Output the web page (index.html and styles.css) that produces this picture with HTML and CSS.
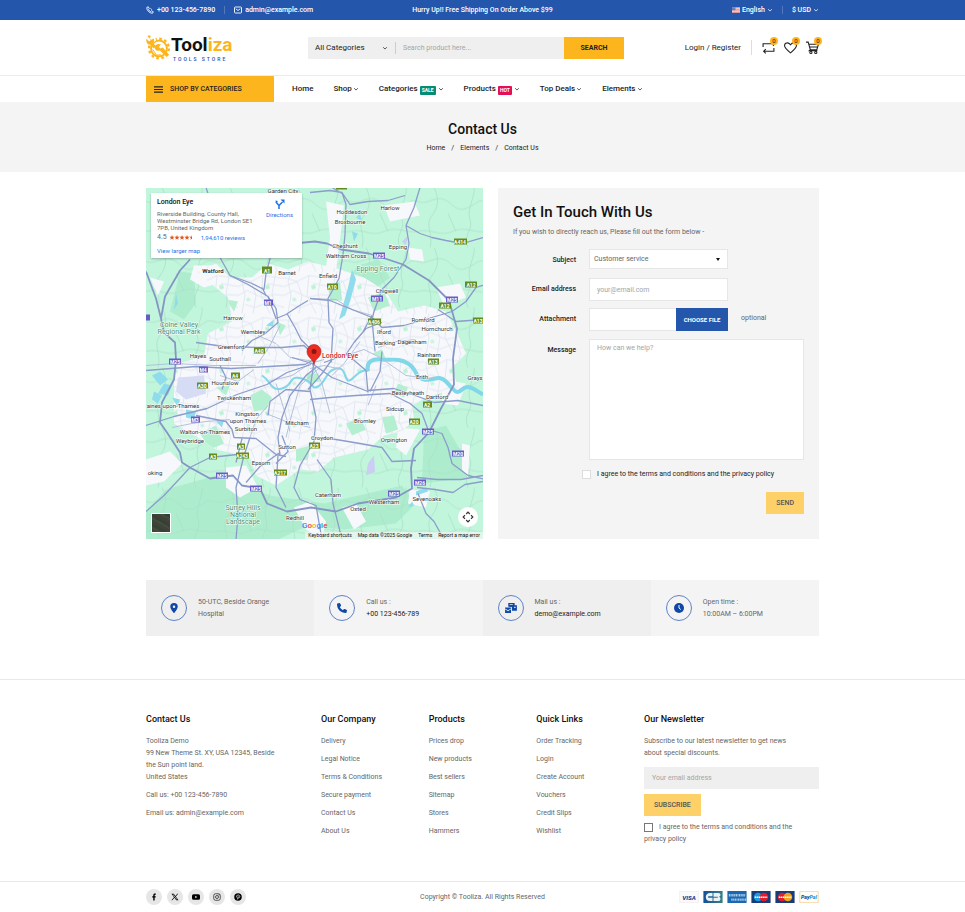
FILE: index.html
```html
<!DOCTYPE html>
<html lang="en">
<head>
<meta charset="utf-8">
<meta name="viewport" content="width=device-width, initial-scale=1">
<title>Contact Us - Tooliza</title>
<link rel="stylesheet" href="styles.css">
</head>
<body>
<svg class="sprite" aria-hidden="true">
  <symbol id="chev" viewBox="0 0 8 8"><path d="M1.500 3 4 5.400l2.500-2.400" fill="none" stroke="currentColor" stroke-width="1"/></symbol>
  <symbol id="phone" viewBox="0 0 512 512"><path fill="currentColor" d="M165 25c-8-19-29-29-48-23L29 26C12 31 0 46 0 64c0 247 201 448 448 448 18 0 33-12 38-29l24-88c5-20-5-41-24-49l-96-40c-16-7-35-2-46 12l-40 49c-71-33-127-90-161-161l50-40c13-11 18-30 11-46z"/></symbol>
</svg>

<div class="topbar">
  <div class="container topbar-row">
    <div class="topbar-side">
      <a href="#"><svg class="ico8" viewBox="0 0 16 16" fill="none" stroke="currentColor" stroke-width="1.800"><path d="M4.500 1.500 1.500 3C1.500 9 7 14.500 13 14.500l1.500-3-3.500-2-2 1.500C7.500 10.500 5.500 8.500 5 7l1.500-2z"/><path d="M9 5c1.200.3 2 1 2.200 2.200"/></svg>+00 123-456-7890</a>
      <span class="sep"></span>
      <a href="#"><svg class="ico8" viewBox="0 0 16 14" fill="none" stroke="currentColor" stroke-width="1.800"><rect x="1" y="1" width="14" height="12" rx="1.500"/><path d="m3.500 4.500 4.500 3.500 4.500-3.500"/></svg>admin@example.com</a>
    </div>
    <p>Hurry Up!! Free Shipping On Order Above $99</p>
    <div class="topbar-side end">
      <button type="button"><svg class="flag" viewBox="0 0 16 11"><path fill="#f7f1f1" d="M0 0h16v11H0z"/><path stroke="#e0605c" stroke-width="1.300" d="M0 1h16M0 4h16M0 7h16M0 10h16"/><path fill="#6a7fb8" d="M0 0h7v6H0z"/></svg>English<svg class="chev"><use href="#chev"/></svg></button>
      <span class="sep"></span>
      <button type="button">$ USD<svg class="chev"><use href="#chev"/></svg></button>
    </div>
  </div>
</div>

<header class="header">
  <div class="container header-row">
    <a class="logo" href="#" aria-label="Tooliza Tools Store">
      <svg class="logo-mark" viewBox="0 0 50 54">
        <circle cx="27" cy="29" r="16.500" fill="none" stroke="#fdb51e" stroke-width="4"/>
        <circle cx="27" cy="29" r="20.500" fill="none" stroke="#fdb51e" stroke-width="5" stroke-dasharray="5.500 5.230"/>
        <path fill="#fff" d="M0 0h17l4 12-10 9L0 18z"/>
        <path fill="#fdb51e" d="M3 3c2-1 5-1 7 0l-2 5 3 3 5-3c2 4 1 8-2 10l7 6-5 5-8-8C3 21-1 15 1 9l5 5 3-1 0-3z"/>
        <path fill="#fdb51e" d="M18 26c2-6 8-8 13-5l-4 5 3 3 5-2 13 15-5 5-14-14c-6 3-11-1-11-7z"/>
        <path d="m14 31 8 12 9-1" fill="none" stroke="#fdb51e" stroke-width="2"/>
      </svg>
      <span class="logo-text"><strong>Tool<em>iza</em></strong><small>TOOLS STORE</small></span>
    </a>
    <form class="search">
      <span class="search-cat"><select aria-label="Category"><option>All Categories</option></select><svg class="chev"><use href="#chev"/></svg></span>
      <input type="search" placeholder="Search product here..." aria-label="Search product">
      <button type="button">SEARCH</button>
    </form>
    <div class="account">
      <a href="#">Login / Register</a>
      <span class="sep"></span>
      <a class="tool" href="#" aria-label="Compare"><svg viewBox="0 0 24 24"><path d="M2 11V5h19v4M22 13v6H4M7 15l-4 4 4 4"/></svg><b>0</b></a>
      <a class="tool" href="#" aria-label="Wishlist"><svg viewBox="0 0 24 24"><path d="M12 22C6 17 1 13 1 8.500 1 3 8 1.500 12 7c4-5.500 11-4 11 1.500C23 13 18 17 12 22z"/></svg><b>0</b></a>
      <a class="tool" href="#" aria-label="Cart"><svg viewBox="0 0 24 24"><path d="M0 2h4l4 14h12l3-10H5M8 16l-2 2h15M7 11h14"/><circle cx="9" cy="21" r="2"/><circle cx="18" cy="21" r="2"/></svg><b>0</b></a>
    </div>
  </div>
</header>

<nav class="nav">
  <div class="container nav-row">
    <button class="cats" type="button"><svg viewBox="0 0 9 7"><path d="M0 .8h9M0 3.500h9M0 6.200h9" stroke="currentColor" stroke-width="1.200"/></svg>SHOP BY CATEGORIES</button>
    <ul>
      <li><a href="#">Home</a></li>
      <li><a href="#">Shop<svg class="chev"><use href="#chev"/></svg></a></li>
      <li><a href="#">Categories<i class="tag sale">SALE</i><svg class="chev"><use href="#chev"/></svg></a></li>
      <li><a href="#">Products<i class="tag hot">HOT</i><svg class="chev"><use href="#chev"/></svg></a></li>
      <li><a href="#">Top Deals<svg class="chev"><use href="#chev"/></svg></a></li>
      <li><a href="#">Elements<svg class="chev"><use href="#chev"/></svg></a></li>
    </ul>
  </div>
</nav>

<section class="banner">
  <h1>Contact Us</h1>
  <p><a href="#">Home</a><span>/</span><a href="#">Elements</a><span>/</span><a href="#">Contact Us</a></p>
</section>

<main class="container">
  <section class="contact">
    <div class="map">
      <svg class="map-art" viewBox="0 0 337 352" preserveAspectRatio="xMidYMid slice" role="img" aria-label="Map of London">
        <defs>
          <pattern id="streets" width="46" height="42" patternUnits="userSpaceOnUse">
            <path d="M0 6l13 4 12-6 21 3M0 24l9-5 15 7 12-3 10 1M4 42l3-18-3-14 3-10M13 10l5 14-3 18M25 4l-2 20 9 18M38 0l-4 22 5 20M7 33l10 3 13-5 16 5M29 12l17 3M0 15l13-5" fill="none" stroke="#dde3ed" stroke-width=".8"/>
            <path d="M27 14l4-1 1 4-4 1z" fill="#bdf2d6"/><path d="M8 27l3-1 2 3-4 1z" fill="#c9f4dd"/>
          </pattern>
          <pattern id="lanes" width="68" height="60" patternUnits="userSpaceOnUse">
            <path d="M0 14c10 4 16-6 26-2s12 14 24 8 10-8 18-6M12 60c4-14-6-22 2-32S20 8 16 0M50 60c-6-12 6-18 2-28S58 8 56 0M0 44c12-4 22 6 34 0s22 2 34 0M30 26l8 18" fill="none" stroke="#a9dfc8" stroke-width=".8"/>
          </pattern>
          <clipPath id="town"><path id="townshape" d="M50 84 70 76l14 14 22 0 16-14 20 6 20-8 32 8 24 8 22 14 12 20 26-6 22 6 12 24 8 18-14 14 6 20-32 10-14 8 2 14-12 12-18 4-16 14-34 8-16 14-18-2-24 16-20-10-6-18-34-8-18-12-24-14V178l30-10 4-22 24-12-4-24z"/></clipPath>
        </defs>
        <path fill="#c2f6dc" d="M0 0h337v352H0z"/>
        <path fill="#adedce" d="M20 302l50-14 54 20 54 8 52-12 26-6 14 18-20 20-52 6-36-4-30 14H0v-28zM278 244l22-6 14 24 12 28-50 6zM212 78l20-6 12 18-18 14-20 4-6-14zM34 84l14 2 2 30-12 16-14-8z"/>
        <path fill="url(#lanes)" d="M0 0h337v352H0z"/>
        <use href="#townshape" fill="#f6f8fb"/>
        <path fill="#f6f8fb" d="M48 78l22 0 8 16-20 6-14-8zM180 14l18 4-4 34-4 32-10-4 4-30zM238 18l30-4 6 14-30 6zM316 256l8 2-2 32-6-8zM80 280l20-2 12 22-18 10-14-10zM0 272l24-8 12 12-18 18-18 4zM148 320l16-6 16 20-4 18-16-10zM264 302l20 2-4 16-18-4zM196 320l14-4 10 18-12 8zM262 60l14 2 2 12-14-2zM4 90l14 4-6 14zM290 100l24-4 6 14-22 8zM296 192l24 4-8 22-16-2zM252 240l22 2-14 26-10-8z"/>
        <g clip-path="url(#town)">
          <path fill="url(#streets)" d="M0 60h337v250H0z"/>
          <path fill="#b5efd1" d="M104 208l12-6 10 8-6 12-12 2zM60 130l12-8 2 14-10 6zM80 112l12 2-4 10zM182 98l12-4 2 18-12 2zM222 110l16-6 6 14-16 6zM130 134l10 4-6 10zM54 246l16-8 8 18-14 6zM160 186l12 0 2 8-12 2zM252 196l10 4-4 10-10-4zM200 236l14-6 6 12-14 6zM150 262l14-4-2 14-12 2zM236 230l12-2 4 14-12 4zM226 166l10-4 4 10zM70 200l14-2-4 10z"/>
        </g>
        <path fill="#d5dcf4" d="M32 190l26-2 2 18-20 6-10-8z"/>
        <path fill="#c9cef2" d="M222 276l6-8 1 16-9 4zM256 54l6-6-2 10z"/>
        <g fill="#8fdced"><path d="M6 188l8-4 8 8-8 6zM18 196l8 2-4 10-10-2zM8 204l8 4-4 8-6-4zM40 222l10 2-2 8-8-2zM70 234l8-2-2 8zM26 210l8 2-2 8zM206 82l4 10-6 22-5 14-6 4 4-14 5-18zM206 44l6 2-4 8zM210 30l4-4 2 8zM30 106l2 10-4 6zM120 138l8-6-1 7zM270 304l10-4 2 4-12 4zM262 320l4-6 2 4z"/></g>
        <path d="M116 188c10 6 8 16 20 13s6-14 20-10 8 12 16 8 8-16 18-18 8 10 12 12 10-12 20-10" fill="none" stroke="#80d7e7" stroke-width="2"/>
        <path d="M222 184c-2-10 4-13 14-12s16-2 26 4 6 14 16 16 14-6 22 2 10 14 16 8 12 0 21 5" fill="none" stroke="#80d7e7" stroke-width="4"/>
        <g fill="none" stroke="#b4c0dc" stroke-width="1">
          <path d="M164 111l26 1 16 10 20 6M196 182l-18-4-14 3M112 176l12-18 10-20M112 148l18 8 14 14 24 4M178 172l-14 4-18 12-24 6M74 188l18 6 16-12M184 226l-8-30-10-20M140 250l6-24 8-28 20-18M84 232l-24 2-14 2-20 4M104 250l6-18 12-14M214 154l-16 22-12 12M232 160l18-6 20-2M230 198l-8 20M120 226l20 8 24 6M200 168l18-6 16 8 26 18 30 4M0 178l28-2 40 2 42 0M130 196l8 26 6 22"/>
        </g>
        <g fill="none" stroke="#8c9ccb" stroke-width="1.300" stroke-linejoin="round">
          <path d="M60 0l2 6M64 60l10 10 10 18 18 9 20 12 8 12 2 14-14 12-12 6-10 10"/>
          <path d="M84 88l22 8 12 6 2-16 6-22M120 108l-4-8M122 109l8 22 10-4 12-8 10-6M141 126l8 14 6 12 12 12"/>
          <path d="M164 5l20-2 12 2 8 12 18-3 20-1 17-5M196 5l4 12-1 30-2 20-4 24-11 20 1 24 4 6-2 34M186 0l10 6M274 0l-6 20-8 18 3 18-3 16-12 18-12 12-8 22-2 8 3 32M260 38l14 8 12 4 14 3 16 3 21-6"/>
          <path d="M164 111l20 2 22 9 20 8 10 10 22-2 28-8 20-6 14-10 10-14 19-6M292 122l18 12 27-2M236 135l-16 6-12 14-8 12-22 8M226 128l-10 18"/>
          <path d="M0 183l50-4 35 2 38-2 36-2 14-8M0 238l28-9 33-8 30-14 30-10 20-12 24-8M50 228l30 6 6 8 2 8 22 1 20 16 10 2M50 155l28 4 34 1 24 0 22-2 10 10M134 268l-2-18 4-20 8-22 16-20 10-8"/>
          <path d="M0 324l18-16 26-28 20-10 36-4M104 250l-6 18-6 24-2 8 2 28-2 24M96 251l-6 24M134 265l-20 14-14 16M132 268l-2 32 10 20M136 248l6 16-12 12"/>
          <path d="M168 174l-4 28 6 28-2 24-14 24-6 22 6 12 16 6 6 34M171 272l14 20 2 24 9 36M164 212l20-2 26-2 34-2 20 10 12 10 6 16 14 4 6 14 4 16 16 12 35 8M166 250l24 2 24 4 22 4 10 14 24-1M271 290l20 2 24 0 22-4M271 300l18 2 18 3 12-8 18-3M272 306l8 20 8 8 10 18M222 203l26-2 24 8 16 6 24-2 25 5M222 205l-2-22-14-12"/>
          <path d="M164 204l-24-2-16 12-2 14M186 172l-10 14-14 16M236 164l-2 20-10 20M146 170l20 6 20 14 36 14M74 178l6 12-4 12"/>
        </g>
        <path d="M0 84l10 27 5 20 3 14 11 10 1 17-2 20-12 23-2 20 7 10 13 20 2 10 8 5 20 11 23-3 9 10 18 3 7 15 20 8 24-4 25 4 22-8 38-6 16-9-1-20 3-20 15-16 12-24 13-24-1-26 4-30-4-14-4-14-20-20-26-16-18-6-16-5-28-4-14-6-12-2-22 2M15 131l4-22 15-26 10-11" fill="none" stroke="#8596c5" stroke-width="1.800" stroke-linejoin="round"/>
        <g class="lbl">
          <text x="137" y="5">Garden City</text><text x="206" y="26">Hoddesdon</text><text x="204" y="36">Broxbourne</text><text x="244" y="22">Harlow</text><text x="199" y="60">Cheshunt</text><text x="200" y="70">Waltham Cross</text><text x="252" y="61">Epping</text><text x="67" y="85" class="big">Watford</text><text x="141" y="87">Barnet</text><text x="182" y="90">Enfield</text><text x="241" y="105">Chigwell</text><text x="87" y="132">Harrow</text><text x="107" y="146">Wembley</text><text x="277" y="134">Romford</text><text x="291" y="143">Hornchurch</text><text x="238" y="146">Ilford</text><text x="239" y="157">Barking</text><text x="266" y="156">Dagenham</text><text x="85" y="161">Greenford</text><text x="52" y="170">Hayes</text><text x="74" y="173">Southall</text><text x="283" y="169">Rainham</text><text x="276" y="191">Erith</text><text x="329" y="192">Grays</text><text x="79" y="197">Hounslow</text><text x="262" y="207">Bexleyheath</text><text x="291" y="211">Dartford</text><text x="88" y="212">Twickenham</text><text x="27" y="220">aines-upon-Thames</text><text x="249" y="223">Sidcup</text><text x="101" y="228">Kingston</text><text x="102" y="235">upon Thames</text><text x="100" y="243">Surbiton</text><text x="59" y="246">Walton-on-Thames</text><text x="219" y="235">Bromley</text><text x="151" y="237">Mitcham</text><text x="176" y="252">Croydon</text><text x="248" y="254">Orpington</text><text x="44" y="255">Weybridge</text><text x="141" y="261">Sutton</text><text x="115" y="277">Epsom</text><text x="9" y="287">oking</text><text x="182" y="309">Caterham</text><text x="238" y="316">Westerham</text><text x="212" y="323">Oxted</text><text x="281" y="313">Sevenoaks</text><text x="149" y="332">Redhill</text>
        </g>
        <g class="lbl park"><text x="232" y="83">Epping Forest</text><text x="33" y="139">Colne Valley</text><text x="33" y="146">Regional Park</text><text x="97" y="322">Surrey Hills</text><text x="97" y="329">National</text><text x="97" y="336">Landscape</text></g>
        <g class="road" fill="#648c1a">
          <path d="M116 79h10v7h-10zM181 96h11v6h-11zM308 51h13v6h-13zM319 94h12v6h-12zM293 115h12v6h-12zM327 130h10v6h-10zM222 131h13v6h-13zM108 160h11v6h-11zM282 171h11v6h-11zM85 185h9v6h-9zM51 195h11v6H51zM277 214h9v6h-9zM263 231h11v6h-11zM163 255h11v6h-11zM91 256h8v6h-8zM90 265h13v6H90zM63 266h8v6h-8zM128 282h13v6h-13zM190 0h11v2h-11z"/>
          <text x="121" y="85">A1</text><text x="186" y="101">A10</text><text x="314" y="56">A414</text><text x="325" y="99">A12</text><text x="299" y="120">A12</text><text x="332" y="135">A13</text><text x="228" y="136">A406</text><text x="113" y="165">A40</text><text x="287" y="176">A13</text><text x="89" y="190">A4</text><text x="56" y="200">A30</text><text x="281" y="219">A2</text><text x="268" y="236">A20</text><text x="168" y="260">A23</text><text x="95" y="261">A3</text><text x="96" y="270">A243</text><text x="67" y="271">A3</text><text x="134" y="287">A217</text>
        </g>
        <g class="road" fill="#675cc6">
          <path d="M118 112h9v6h-9zM227 65h12v6h-12zM225 108h12v6h-12zM300 109h12v6h-12zM23 171h12v6H23zM53 179h9v6h-9zM45 229h9v6h-9zM276 241h12v6h-12zM306 263h12v6h-12zM268 292h12v6h-12zM242 303h12v6h-12zM70 285h12v6H70zM104 298h12v6h-12zM0 127h4v6H0z"/>
          <text x="122" y="117">M1</text><text x="233" y="70">M25</text><text x="231" y="113">M11</text><text x="306" y="114">M25</text><text x="29" y="176">M25</text><text x="57" y="184">M4</text><text x="49" y="234">M3</text><text x="282" y="246">M25</text><text x="312" y="268">M20</text><text x="274" y="297">M26</text><text x="248" y="308">M25</text><text x="76" y="290">M25</text><text x="110" y="303">M25</text>
        </g>
        <path fill="#ea2d22" stroke="#b71f17" stroke-width=".6" d="M168 177c-1-6-7-7-7-13a7 7 0 0 1 14 0c0 6-6 7-7 13z"/><circle cx="168" cy="164" r="2.500" fill="#8d1510"/>
        <text class="pin-label" x="176" y="170">London Eye</text>
      </svg>
      <div class="place">
        <div>
          <h2>London Eye</h2>
          <p>Riverside Building, County Hall,<br>Westminster Bridge Rd, London SE1<br>7PB, United Kingdom</p>
          <p class="rating"><b>4.5</b><span class="stars" aria-label="4.5 stars"><svg viewBox="0 0 50 10"><defs><path id="star" d="m5 0 1.400 3.300 3.600.3-2.700 2.400.8 3.500L5 7.700 1.900 9.500l.8-3.500L0 3.600l3.600-.3z"/></defs><g fill="#e7551c"><use href="#star"/><use href="#star" x="10"/><use href="#star" x="20"/><use href="#star" x="30"/><path d="m45 0v7.700l-3.100 1.800.8-3.500L40 3.600l3.600-.3z"/></g></svg></span><a href="#">1,94,610 reviews</a></p>
          <a href="#">View larger map</a>
        </div>
        <a class="directions" href="#"><svg viewBox="0 0 20 20"><path d="M8 20v-7L2 6M8 13l7-7" fill="none" stroke="#1a73e8" stroke-width="3"/><path fill="#1a73e8" d="M11 1h8v8z"/><path fill="#1a73e8" d="M1 3l5 1-4 5z"/></svg>Directions</a>
      </div>
      <button class="sat" type="button" aria-label="Satellite view"></button>
      <button class="full" type="button" aria-label="Move map"><svg viewBox="0 0 20 20" fill="none" stroke="#333" stroke-width="2"><path d="m7 5 3-3 3 3M7 15l3 3 3-3M5 7l-3 3 3 3M15 7l3 3-3 3"/></svg></button>
      <span class="google"><i>G</i><i>o</i><i>o</i><i>g</i><i>l</i><i>e</i></span>
      <div class="map-legal"><span>Keyboard shortcuts</span><span>Map data ©2025 Google</span><a href="#">Terms</a><a href="#">Report a map error</a></div>
    </div>

    <form class="panel">
      <h2>Get In Touch With Us</h2>
      <p>If you wish to directly reach us, Please fill out the form below -</p>
      <div class="fields">
        <label for="subject">Subject</label>
        <div class="pick"><select id="subject"><option>Customer service</option></select></div>
        <label for="email">Email address</label>
        <input id="email" class="box" type="email" placeholder="your@email.com">
        <label for="file">Attachment</label>
        <div class="file"><input id="file" type="file"><span>CHOOSE FILE</span></div>
        <span class="hint">optional</span>
        <label for="message">Message</label>
        <textarea id="message" class="box" placeholder="How can we help?"></textarea>
      </div>
      <label class="agree"><input type="checkbox">I agree to the terms and conditions and the privacy policy</label>
      <button class="btn soft" type="button">SEND</button>
    </form>
  </section>

  <section class="info">
    <div><span class="ring"><svg viewBox="0 0 384 512"><path fill="currentColor" fill-rule="evenodd" d="M216 499c51-64 168-220 168-307a192 192 0 1 0-384 0c0 87 117 243 168 307 12 16 36 16 48 0zM192 128a64 64 0 1 1 0 128 64 64 0 0 1 0-128z"/></svg></span><p>50-UTC, Beside Orange Hospital</p></div>
    <div><span class="ring"><svg viewBox="0 0 512 512"><use href="#phone"/></svg></span><p>Call us :<br><a href="#">+00 123-456-789</a></p></div>
    <div><span class="ring"><svg class="wide" viewBox="0 0 26 22" fill="currentColor"><path fill-rule="evenodd" d="M7 0h14v5h5v12H15V9L7 8zM10 2v2h7V2zM20 8v3h3V8z"/><path d="M0 10h13v2l-6.500 4L0 12zM0 14l6.500 4 6.500-4v8H0z"/></svg></span><p>Mail us :<br><a href="#">demo@example.com</a></p></div>
    <div><span class="ring"><svg viewBox="0 0 20 20"><circle cx="10" cy="10" r="10" fill="currentColor"/><path d="M10 4v6l3.500 3" fill="none" stroke="#fff" stroke-width="2"/></svg></span><p>Open time :<br>10:00AM – 6:00PM</p></div>
  </section>
</main>

<footer class="footer">
  <div class="container columns">
    <section>
      <h3>Contact Us</h3>
      <p>Tooliza Demo<br>99 New Theme St. XY, USA 12345, Beside<br>the Sun point land.<br>United States</p>
      <p>Call us: <a href="#">+00 123-456-7890</a></p>
      <p>Email us: <a href="#">admin@example.com</a></p>
    </section>
    <section>
      <h3>Our Company</h3>
      <ul><li><a href="#">Delivery</a></li><li><a href="#">Legal Notice</a></li><li><a href="#">Terms &amp; Conditions</a></li><li><a href="#">Secure payment</a></li><li><a href="#">Contact Us</a></li><li><a href="#">About Us</a></li></ul>
    </section>
    <section>
      <h3>Products</h3>
      <ul><li><a href="#">Prices drop</a></li><li><a href="#">New products</a></li><li><a href="#">Best sellers</a></li><li><a href="#">Sitemap</a></li><li><a href="#">Stores</a></li><li><a href="#">Hammers</a></li></ul>
    </section>
    <section>
      <h3>Quick Links</h3>
      <ul><li><a href="#">Order Tracking</a></li><li><a href="#">Login</a></li><li><a href="#">Create Account</a></li><li><a href="#">Vouchers</a></li><li><a href="#">Credit Slips</a></li><li><a href="#">Wishlist</a></li></ul>
    </section>
    <section>
      <h3>Our Newsletter</h3>
      <form class="news">
        <p>Subscribe to our latest newsletter to get news about special discounts.</p>
        <input type="email" placeholder="Your email address" aria-label="Your email address">
        <button class="btn soft" type="button">SUBSCRIBE</button>
        <label><input type="checkbox">I agree to the terms and conditions and the privacy policy</label>
      </form>
    </section>
  </div>
  <div class="bottom">
    <div class="container bottom-row">
      <div class="social">
        <a href="#" aria-label="Facebook"><svg viewBox="0 0 16 16"><path d="M6.500 15V9H4.500V6.300h2V4.500C6.500 2.300 7.800 1 10 1h1.600v2.600h-1.200c-.8 0-1.100.4-1.100 1.100v1.600h2.300L11.200 9H9.300v6z"/></svg></a>
        <a href="#" aria-label="X"><svg viewBox="0 0 16 16"><path fill-rule="evenodd" d="M1 1.500h4.500l3.300 4.400 3.800-4.400h1.800L9.600 7l5.400 7.500h-4.500L6.900 9.600l-4.200 4.900H.9L6 8.500zM3.400 3l7.800 10h1.400L4.900 3z"/></svg></a>
        <a href="#" aria-label="YouTube"><svg viewBox="0 0 16 16"><path fill-rule="evenodd" d="M3 2.500h10a3 3 0 0 1 3 3v5a3 3 0 0 1-3 3H3a3 3 0 0 1-3-3v-5a3 3 0 0 1 3-3zM6.500 5.500v5l4-2.500z"/></svg></a>
        <a href="#" aria-label="Instagram"><svg viewBox="0 0 16 16" fill="none" stroke="#222" stroke-width="1.500"><rect x="1.500" y="1.500" width="13" height="13" rx="3.500"/><circle cx="8" cy="8" r="3"/><circle cx="12" cy="4" r=".4"/></svg></a>
        <a href="#" aria-label="Pinterest"><svg viewBox="0 0 16 16"><circle cx="8" cy="8" r="7.500"/><path d="M5.500 9C4 6.500 5.500 4 8.200 4s4.200 2.300 3 4.700c-.8 1.600-2.700 1.700-3.200.8M8.500 6.500 6.800 13" fill="none" stroke="#e8e8e8" stroke-width="1.500"/></svg></a>
      </div>
      <p>Copyright © Tooliza. All Rights Reserved</p>
      <div class="pay">
        <svg viewBox="0 0 40 25" role="img" aria-label="Visa"><path fill="#fafafa" stroke="#e3e3ea" d="M.5.5h39v24H.5z"/><text x="20" y="18" fill="#1d3c90">VISA</text></svg>
        <svg viewBox="0 0 40 25" role="img" aria-label="Carte Bancaire"><defs><linearGradient id="cb"><stop stop-color="#13509c"/><stop offset="1" stop-color="#3a7f80"/></linearGradient></defs><path fill="url(#cb)" d="M0 0h40v25H0z"/><path fill="#e9f2f5" d="M19 4v7h-9v3h9v7h-5C2 21 2 4 14 4zM21 4h10c6 0 6 7 1 8 5 1 5 9-1 9H21v-7h9v-2h-9z"/></svg>
        <svg viewBox="0 0 40 25" role="img" aria-label="American Express"><path fill="#1b68b2" d="M0 0h40v25H0z"/><path stroke="#a5c8e6" stroke-width="5" stroke-dasharray="3 1 2 1" d="M3 9h34M8 18h31"/></svg>
        <svg viewBox="0 0 40 25" role="img" aria-label="Maestro"><path fill="#173c7c" d="M0 0h40v25H0z"/><circle cx="14" cy="12.500" r="9" fill="#1b9ae0"/><circle cx="26" cy="12.500" r="9" fill="#e21c2c"/><path stroke="#fff" stroke-width="3" stroke-dasharray="3 1" d="M7 13h26"/></svg>
        <svg viewBox="0 0 40 25" role="img" aria-label="MasterCard"><path fill="#173c7c" d="M0 0h40v25H0z"/><circle cx="14" cy="12.500" r="9" fill="#e21c2c"/><circle cx="26" cy="12.500" r="9" fill="#f5a11c"/><path stroke="#fff" stroke-width="3" stroke-dasharray="3 1" d="M7 13h26"/></svg>
        <svg viewBox="0 0 40 25" role="img" aria-label="PayPal"><path fill="#fffdf6" stroke="#f5c98c" stroke-width="1.500" d="M.8.8h38.400v23.400H.8z"/><text class="pp" x="20" y="16" fill="#1d3c90">Pay<tspan fill="#1f8fd6">Pal</tspan></text></svg>
      </div>
    </div>
  </div>
</footer>
</body>
</html>
```
FILE: styles.css
```css
* { box-sizing: border-box; }
body {
  margin: 0;
  font: 7px/12px Roboto, "Liberation Sans", sans-serif;
  color: #666;
  background: #fff;
}
h1, h2, h3, p, ul { margin: 0; padding: 0; }
h1, h2, h3 { color: #111; font-weight: 500; }
ul { list-style: none; }
a { color: inherit; text-decoration: none; }
button, input, select, textarea { font: inherit; color: inherit; border: 0; border-radius: 0; padding: 0; margin: 0; background: none; }
button { cursor: pointer; }
input::placeholder, textarea::placeholder { color: #a5a5a5; opacity: 1; }
svg { display: block; flex: none; }
.sprite { display: none; }
.container { max-width: 673px; margin: 0 auto; }
.chev { width: 6px; height: 6px; }

.topbar { background: #2456ab; color: #fff; font-weight: 500; }
.topbar-row { display: grid; grid-template-columns: 1fr auto 1fr; align-items: center; height: 20px; }
.topbar-side, .topbar-side a, .topbar-side button { display: flex; align-items: center; }
.topbar-side { gap: 9px; }
.topbar-side a { gap: 3px; }
.topbar-side button { gap: 2px; }
.topbar-side.end { justify-content: flex-end; }
.ico8 { width: 8px; height: 8px; }
.flag { width: 8px; height: 6px; }
.sep { width: 1px; height: 8px; background: #5478bd; }

.header { border-bottom: 1px solid #ececec; }
.header-row { display: grid; grid-template-columns: 162px 316px 1fr; align-items: center; height: 55px; }
.logo { display: flex; align-items: center; gap: 1px; }
.logo-mark { width: 24px; height: 27px; }
.logo-text strong { display: block; font-size: 19px; line-height: 22px; font-weight: 700; color: #111; }
.logo-text em { font-style: normal; color: #fdb51e; }
.logo-text small { display: block; font-size: 5px; line-height: 6px; font-weight: 500; letter-spacing: 2px; color: #2456ab; padding-left: 2px; }
.search { display: grid; grid-template-columns: 87px 1fr 60px; height: 22px; background: #efefef; }
.search-cat { display: flex; align-items: center; padding: 0 7px; color: #222; }
.search-cat select { flex: 1; min-width: 0; appearance: none; font-size: 8px; }
.search input { margin: 5px 0; padding: 0 7px; border-left: 1px solid #ccc; min-width: 0; outline: 0; appearance: none; }
.search button { background: #fdb51e; color: #222; font-weight: 700; }
.account { display: flex; align-items: center; justify-content: flex-end; gap: 10px; color: #222; font-size: 8px; }
.account .sep { height: 15px; background: #ddd; }
.tool { position: relative; margin-right: 1px; }
.tool + .tool { margin-left: -2px; }
.tool:last-child { margin-right: 0; }
.tool svg { width: 13px; height: 13px; fill: none; stroke: #222; stroke-width: 2; }
.tool b { position: absolute; top: -4px; right: -3px; width: 8px; height: 8px; border-radius: 50%; background: #fdb51e; font-size: 6px; font-weight: 400; line-height: 8px; text-align: center; }

.nav { color: #222; font-weight: 500; font-size: 8px; }
.nav-row, .nav ul { display: flex; align-items: center; }
.nav-row { gap: 18px; }
.nav ul { gap: 20px; }
.nav a { display: flex; align-items: center; gap: 1px; }
.cats { display: flex; align-items: center; gap: 7px; width: 128px; height: 26px; padding-left: 8px; background: #fdb51e; font-size: 7px; }
.cats svg { width: 9px; height: 7px; }
.tag { margin: 2px 1px 0; padding: 0 2px; border-radius: 1px; color: #fff; font-size: 5px; line-height: 9px; font-style: normal; font-weight: 700; }
.sale { background: #078c74; }
.hot { background: #e50f55; }

.banner { padding: 19px 0 18px; background: #f4f4f4; text-align: center; color: #222; }
.banner h1 { font-size: 14px; line-height: 16px; margin-bottom: 5px; }
.banner p { display: flex; justify-content: center; gap: 6px; }

.contact { display: grid; grid-template-columns: 337fr 321fr; gap: 15px; padding-top: 16px; }
.map { position: relative; overflow: hidden; min-height: 351px; }
.map-art { position: absolute; inset: 0; width: 100%; height: 100%; font-family: Roboto, sans-serif; }
.lbl { font-size: 6px; fill: #333; text-anchor: middle; stroke: #fff; stroke-width: 1px; paint-order: stroke; }
.lbl .big { font-weight: 500; fill: #111; }
.park { font-size: 7px; fill: #3f8f6d; }
.road text { font-size: 5px; font-weight: 700; fill: #fff; text-anchor: middle; }
.pin-label { font-size: 7px; font-weight: 500; fill: #c9281f; stroke: #fff; stroke-width: 1px; paint-order: stroke; }
.place { position: absolute; left: 5px; top: 5px; width: 151px; display: flex; justify-content: space-between; padding: 4px 9px 4px 6px; background: #fff; box-shadow: 0 1px 2px #0004; font-size: 6px; line-height: 7px; }
.place h2 { font-size: 7px; line-height: 10px; margin-bottom: 3px; }
.place a { color: #1a73e8; }
.rating { display: flex; align-items: center; gap: 2px; margin: 3px 0 6px; }
.rating b { font-size: 7px; font-weight: 400; }
.rating a { padding-left: 4px; }
.stars svg { width: 26px; height: 5px; }
.directions { display: flex; flex-direction: column; align-items: center; padding-top: 2px; gap: 2px; }
.directions svg { width: 10px; height: 10px; }
.sat { position: absolute; left: 5px; bottom: 6px; width: 20px; height: 20px; border: 1px solid #fff; background: repeating-linear-gradient(30deg, #3c4437 0 3px, #444a3e 3px 5px, #383f34 5px 8px); }
.full { position: absolute; right: 5px; bottom: 12px; width: 20px; height: 20px; border-radius: 50%; background: #fff; display: grid; place-items: center; }
.full svg { width: 12px; height: 12px; }
.google { position: absolute; left: 156px; bottom: 8px; font-size: 8px; line-height: 10px; font-weight: 500; }
.google i { font-style: normal; color: #4285f4; }
.google i:nth-child(2), .google i:nth-child(6) { color: #ea4335; }
.google i:nth-child(3) { color: #f5b400; }
.google i:nth-child(5) { color: #34a853; }
.map-legal { position: absolute; right: 0; bottom: 0; display: flex; gap: 6px; padding: 0 3px; background: #f5f5f5aa; color: #111; font-size: 5px; line-height: 7px; }

.panel { display: flex; flex-direction: column; padding: 14px 15px 25px; background: #f4f4f4; }
.panel h2 { font-size: 15px; line-height: 20px; margin-bottom: 4px; }
.fields { display: grid; grid-template-columns: 63px 139px 1fr; column-gap: 13px; margin-top: 11px; }
.fields > label { grid-column: 1; padding-top: 5px; text-align: right; font-weight: 500; color: #222; }
.box, .pick, .file { border: 1px solid #e6e6e6; background: #fff; outline: 0; }
.pick { position: relative; height: 20px; margin-bottom: 9px; }
.pick select { width: 100%; height: 18px; padding: 0 4px; appearance: none; }
.pick::after { content: ""; position: absolute; right: 7px; top: 8px; border: 2px solid transparent; border-top: 3px solid #111; }
.box { padding: 0 7px; min-width: 0; }
input.box { height: 23px; margin-bottom: 7px; }
.file { position: relative; display: flex; justify-content: flex-end; height: 23px; margin-bottom: 8px; }
.file input { position: absolute; inset: 0; width: 100%; height: 100%; opacity: 0; }
.file span { width: 52px; margin: -1px; background: #2456ab; color: #fff; font-size: 6px; font-weight: 700; line-height: 23px; text-align: center; }
.hint { padding-top: 4px; }
.fields textarea { grid-column: 2 / 4; height: 121px; padding-top: 2px; resize: none; }
.agree { display: flex; align-items: center; gap: 6px; margin: 8px 0 12px 69px; color: #222; }
input[type="checkbox"] { appearance: none; width: 9px; height: 9px; border: 1px solid #ddd; background: #fff; flex: none; }
.btn { height: 22px; padding: 0 10px; font-weight: 500; color: #555; }
.soft { background: #fdd068; }
.panel .btn { align-self: flex-end; }

.info { display: grid; grid-template-columns: repeat(4, 1fr); margin: 41px 0 43px; background: #f4f4f4; }
.info > div { display: flex; align-items: center; gap: 11px; padding: 15px; height: 56px; }
.info > div:nth-child(odd) { background: #efefef; }
.info p { max-width: 84px; }
.info a { color: #222; }
.ring { display: grid; place-items: center; flex: none; width: 26px; height: 26px; border: 1px solid #5f84c6; border-radius: 50%; color: #1048a5; }
.ring svg { width: 10px; height: 10px; }
.ring .wide { width: 12px; }

.footer { border-top: 1px solid #e9e9e9; }
.columns { display: grid; grid-template-columns: 26fr 16fr 16fr 16fr 26fr; padding: 32px 0 36px; }
.columns h3 { font-size: 9px; line-height: 14px; margin-bottom: 9px; }
.columns p { margin-bottom: 6px; }
.columns li { margin-bottom: 6px; }
.news { display: flex; flex-direction: column; align-items: flex-start; }
.news p { max-width: 156px; }
.news > input { width: 100%; height: 22px; margin: 2px 0 5px; padding: 0 8px; background: #efefef; }
.news label { max-width: 166px; margin-top: 5px; }
.news label input { vertical-align: middle; margin-right: 6px; border-color: #777; }
.bottom { border-top: 1px solid #e9e9e9; }
.bottom-row { display: grid; grid-template-columns: 1fr auto 1fr; align-items: center; height: 30px; }
.social, .pay { display: flex; gap: 5px; }
.social a { display: grid; place-items: center; width: 16px; height: 16px; border-radius: 50%; background: #e6e6e6; }
.social svg { width: 8px; height: 8px; }
.pay { justify-content: flex-end; gap: 4px; }
.pay svg { width: 20px; height: 12px; }
.pay text { font: italic 800 13px Roboto, sans-serif; text-anchor: middle; }
.pay .pp { font-size: 11px; }
```
